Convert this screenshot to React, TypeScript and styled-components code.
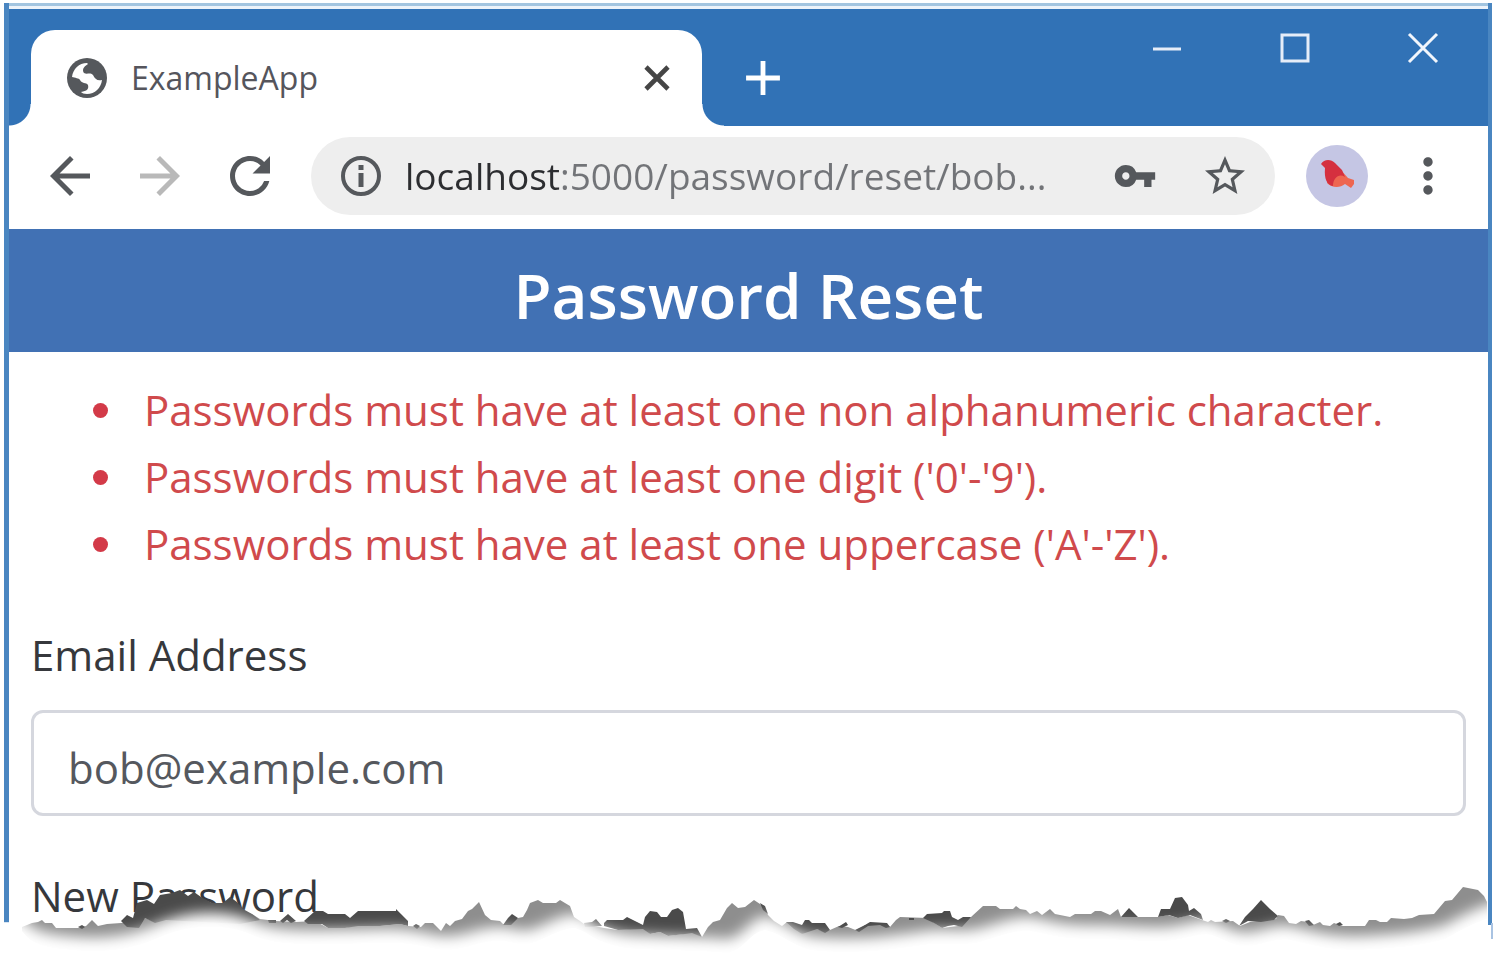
import React from "react";
import styled, { createGlobalStyle } from "styled-components";
import {
  MdAdd,
  MdArrowBack,
  MdArrowForward,
  MdMoreVert,
  MdRefresh,
  MdStarBorder,
  MdVpnKey,
} from "react-icons/md";

const FRAME = "#3172b6";
const INK = "#55585c";

const GlobalStyle = createGlobalStyle`
  *, *::before, *::after { box-sizing: border-box; }
  body {
    margin: 0;
    background: #fff;
    font-family: "Open Sans", "Noto Sans", sans-serif;
    color: #36383c;
  }
  button { border: 0; padding: 0; background: none; font: inherit; color: inherit; }
`;

const Shell = styled.div`
  position: relative;
  padding: 3px 7px 53px 4px;
`;

const BrowserWindow = styled.div`
  height: 920px;
  overflow: hidden;
  border: solid #4a86c1;
  border-width: 0 4px 0 5px;
`;

const TopEdge = styled.div`
  height: 6px;
  border-top: 3px solid #a3c5e0;
  background: #edf3fa;
`;

const TabStrip = styled.div`
  display: flex;
  align-items: flex-end;
  height: 117px;
  padding-left: 22px;
  background: ${FRAME};
`;

const Tab = styled.div`
  position: relative;
  flex: 0 1 671px;
  display: flex;
  align-items: center;
  height: 96px;
  padding: 0 32px 0 36px;
  border-radius: 24px 24px 0 0;
  background: #fff;

  &::before,
  &::after {
    content: "";
    position: absolute;
    bottom: 0;
    width: 22px;
    height: 22px;
  }
  &::before {
    right: 100%;
    background: radial-gradient(circle at 0 0, ${FRAME} 21px, #fff 22px);
  }
  &::after {
    left: 100%;
    background: radial-gradient(circle at 100% 0, ${FRAME} 21px, #fff 22px);
  }
`;

const TabTitle = styled.span`
  flex: 1;
  padding-left: 24px;
  font-size: 32px;
  line-height: 44px;
  color: #55555c;
`;

const IconButton = styled.button<{ $size: number; $color?: string }>`
  flex: none;
  display: grid;
  place-items: center;
  width: ${(p) => p.$size}px;
  height: ${(p) => p.$size}px;
  color: ${(p) => p.$color ?? INK};

  svg { display: block; }
`;

const NewTab = styled.div`
  flex: 1;
  padding: 0 0 18px 31px;
`;

const WindowControls = styled.div`
  align-self: flex-start;
  display: flex;
  gap: 84px;
  padding: 17px 43px 0 0;
`;

const Toolbar = styled.div`
  display: flex;
  align-items: center;
  height: 103px;
  padding: 0 30px 4px 31px;
`;

const NavButtons = styled.div`
  display: flex;
  gap: 30px;
  padding-right: 31px;
`;

const AddressBar = styled.div`
  flex: 1;
  display: flex;
  align-items: center;
  height: 78px;
  padding: 0 26px;
  border-radius: 39px;
  background: #eee;
`;

const Address = styled.input`
  flex: 1;
  min-width: 0;
  margin: 0 20px;
  padding: 0;
  border: 0;
  outline: 0;
  font: 37px/52px "Open Sans", "Noto Sans", sans-serif;
  color: transparent;
  background: linear-gradient(90deg, #2c2d30 155px, #727478 155px);
  -webkit-background-clip: text;
  background-clip: text;
`;

const AddressActions = styled.div`
  display: flex;
  gap: 42px;
`;

const Avatar = styled(IconButton)`
  margin: 0 30px 0 31px;
  border-radius: 50%;
  background: #c5c6e4;
`;

const Banner = styled.h1`
  margin: 0;
  height: 123px;
  padding-top: 24px;
  background: #4171b4;
  color: #fff;
  text-align: center;
  font-size: 62px;
  line-height: 84px;
  font-weight: 600;
`;

const Page = styled.main`
  padding: 24px 22px 0;
`;

const Errors = styled.ul`
  margin: 0 0 44px;
  padding-left: 99px;
  color: #d04a4c;
  font-size: 42px;
  line-height: 67px;

  li { padding-left: 14px; }
  li::marker { color: #d33a48; }
`;

const Field = styled.div`
  margin-bottom: 46px;
`;

const Label = styled.label`
  display: block;
  margin-bottom: 22px;
  font-size: 42px;
  line-height: 67px;
`;

const TextBox = styled.input`
  display: block;
  width: 100%;
  height: 106px;
  padding: 8px 34px 0;
  border: 3px solid #d5d7de;
  border-radius: 12px;
  background: #fff;
  color: #55585e;
  font: 42px/67px "Open Sans", "Noto Sans", sans-serif;
`;

const Tear = styled.svg`
  position: absolute;
  left: 0;
  top: 880px;
  width: 100%;
  height: 96px;
  pointer-events: none;
`;

const Globe = () => (
  <svg width="40" height="40" viewBox="0 0 40 40" aria-hidden="true">
    <circle cx="20" cy="20" r="20" fill={INK} />
    <path
      fill="#fff"
      d="M5 19C6 11 12 5 20 5L21 6C16 9 15 12 17 15C20 17 23 14 26 17C28 21 30 23 35 22C34 30 28 36 20 36C17 36 15 35 14 34C20 33 22 31 21 27C19 24 15 26 13 22C12 20 8 20 5 19Z"
    />
  </svg>
);

const InfoIcon = () => (
  <svg width="40" height="40" viewBox="0 0 40 40" aria-hidden="true">
    <circle cx="20" cy="20" r="18" fill="none" stroke={INK} strokeWidth="4" />
    <path d="M20 9V14M20 17V31" stroke={INK} strokeWidth="5" />
  </svg>
);

const Bird = () => (
  <svg width="62" height="62" viewBox="0 0 62 62" aria-hidden="true">
    <path
      fill="#ee6650"
      d="M24 20L34 24L42 33L48 35L48 39L45 43L39 39C34 43 26 43 21 38Z"
    />
    <path
      fill="#d5303f"
      d="M15 19C18 14 25 14 29 18L36 25L39 32C33 28 27 33 27 41C21 40 18 34 19 23Z"
    />
  </svg>
);

const GREY_EDGE =
  "M22 927L32 923L38 922L42 920L45 923L52 923L56 928L78 928L86 926L92 920L98 926L107 924L121 923L137 922L145 918L155 922L166 917L180 910L200 908L225 910L243 912L252 914L260 919L276 921L296 922L315 921L328 928L345 928L358 924L380 926L400 924L408 926L421 927L425 923L433 923L441 931L446 923L450 926L455 921L462 919L468 911L472 909L479 902L485 915L491 920L500 921L504 925L518 918L523 917L527 910L530 903L538 900L543 903L556 903L560 900L565 903L570 906L574 917L580 921L584 924L604 928L618 930L643 928L650 934L660 932L668 936L683 934L692 931L702 937L708 927L713 922L720 920L727 908L732 903L738 908L745 907L754 900L760 904L765 908L768 915L774 921L782 926L787 922L793 923L802 934L812 927L825 932L830 930L839 926L848 927L858 931L865 925L887 924L890 927L896 920L900 917L927 918L942 928L958 926L971 917L983 906L996 906L1000 909L1013 909L1016 906L1020 909L1026 910L1030 914L1037 911L1042 915L1050 909L1055 914L1070 917L1075 914L1091 914L1095 911L1101 911L1110 915L1118 909L1121 917L1158 917L1168 915L1178 918L1188 915L1202 920L1208 922L1211 920L1215 922L1233 921L1240 926L1250 922L1276 919L1278 915L1284 916L1289 923L1296 924L1301 921L1308 922L1313 925L1320 922L1323 925L1330 926L1334 923L1342 926L1365 926L1369 920L1376 920L1380 922L1387 922L1391 918L1404 919L1412 918L1419 915L1434 914L1445 901L1452 900L1463 887L1468 888L1478 890L1484 896L1487 902L1487 976L22 976Z";

const DARK_PATCHES =
  "M121 921L127 915L133 918L137 903L147 900L154 904L160 895L172 893L180 890L188 896L194 892L201 897L212 903L223 903L230 897L237 902L243 909L252 914L260 920L240 924L166 920L155 923L145 918L139 928L127 927Z" +
  "M78 927l4 -2l3 2l-3 2Z M268 920h8v3h-7Z M280 921L288 914L296 921L291 923L287 920L283 923Z" +
  "M304 921L315 911L323 911L328 914L345 914L350 918L358 911L396 911L396 909L408 921L408 926L400 924L380 926L358 926L345 928L328 928L322 924L308 924Z" +
  "M413 926l3 -2l4 2l-3 3Z M503 925L508 918L512 914L518 918L511 925Z M584 923L592 922L596 919L602 926L585 927Z" +
  "M604 923L607 920L623 920L627 917L637 922L643 925L645 917L650 911L657 912L661 917L667 917L672 910L678 908L683 912L686 929L697 928L702 937L692 933L685 934L668 936L660 932L650 934L643 929L618 930L604 926Z" +
  "M760 903L765 906L768 914L763 910Z M786 922L793 922L802 925L805 920L809 920L812 923L825 923L830 930L825 933L817 929L802 934L794 929Z" +
  "M838 927L846 922L848 925L842 928Z M855 930L865 925L870 922L887 923L890 927L886 928L880 925L868 926L859 932Z M909 918h5v2h-5Z" +
  "M923 918L927 914L942 913L944 911L950 911L952 917L958 920L963 917L971 917L962 927L954 925L948 926L942 928L934 923Z" +
  "M1121 917L1129 908L1138 917Z M1158 917L1161 909L1170 909L1175 898L1182 897L1188 905L1189 911L1194 908L1201 914L1203 920L1190 915L1178 918L1169 915Z" +
  "M1222 921l4 -2l4 2l-4 2Z M1239 926L1245 917L1253 909L1261 900L1270 909L1278 916L1274 920L1261 922L1248 921Z M1305 921L1309 920L1314 925L1309 926Z M1336 924l4 -2l3 3l-4 1Z";

const SHADOW_END =
  "M-30 927L22 927C32 940 40 944 85 947C115 948 135 944 160 933C190 920 225 920 250 930C275 942 300 941 380 939C410 937 430 945 445 946C465 946 480 937 495 937C510 936 515 941 528 940C540 938 560 924 575 924C590 928 600 944 640 945C680 947 710 947 728 949C745 945 750 928 765 926C785 930 795 946 820 947C860 950 890 946 930 940C950 939 965 942 980 938C1000 932 1015 926 1030 927C1050 930 1060 936 1100 935C1120 935 1140 938 1165 937C1185 936 1200 928 1212 931C1230 938 1235 943 1250 942C1265 940 1275 934 1290 936C1310 940 1330 947 1360 946C1400 944 1425 941 1445 935C1465 924 1480 914 1530 902L1530 1010L-30 1010Z";

const TornEdge = () => (
  <Tear viewBox="0 880 1499 96" preserveAspectRatio="none" aria-hidden="true">
    <defs>
      <filter id="fade" x="-5%" y="-50%" width="110%" height="200%">
        <feGaussianBlur stdDeviation="7" />
      </filter>
    </defs>
    <path d={GREY_EDGE} fill="#8e8e8e" />
    <path d={DARK_PATCHES} fill="#4a4a4a" />
    <path d={SHADOW_END} fill="#fff" transform="translate(0 -10)" filter="url(#fade)" />
    <path d={SHADOW_END} fill="#fff" transform="translate(0 4)" />
    <path d="M4 880h5v42h-5zM1488 880h4v45h-4z" fill="#4a86c1" />
    <path d="M1491 923h2v16h-2z" fill="#a9c3e2" />
  </Tear>
);

const ERRORS = [
  "Passwords must have at least one non alphanumeric character.",
  "Passwords must have at least one digit ('0'-'9').",
  "Passwords must have at least one uppercase ('A'-'Z').",
];

export default function App() {
  return (
    <Shell>
      <GlobalStyle />
      <BrowserWindow>
        <TopEdge />
        <TabStrip>
          <Tab>
            <Globe />
            <TabTitle>ExampleApp</TabTitle>
            <IconButton $size={26} $color="#454545" aria-label="Close tab">
              <svg width="26" height="26" viewBox="0 0 26 26" stroke="currentColor" strokeWidth="4.6">
                <path d="M2 2L24 24M24 2L2 24" />
              </svg>
            </IconButton>
          </Tab>
          <NewTab>
            <IconButton $size={60} $color="#fff" aria-label="New tab">
              <MdAdd size={58} />
            </IconButton>
          </NewTab>
          <WindowControls>
            <IconButton $size={44} $color="#fff" aria-label="Minimize">
              <svg width="44" height="44" viewBox="0 0 44 44" stroke="#e6edf8" strokeWidth="3">
                <path d="M8 23H36" />
              </svg>
            </IconButton>
            <IconButton $size={44} $color="#fff" aria-label="Maximize">
              <svg width="44" height="44" viewBox="0 0 44 44" stroke="#e6edf8" strokeWidth="3" fill="none">
                <path d="M9 9H35V35H9Z" />
              </svg>
            </IconButton>
            <IconButton $size={44} $color="#fff" aria-label="Close window">
              <svg width="44" height="44" viewBox="0 0 44 44" stroke="#f2f6fc" strokeWidth="3">
                <path d="M8 8L36 36M36 8L8 36" />
              </svg>
            </IconButton>
          </WindowControls>
        </TabStrip>
        <Toolbar>
          <NavButtons>
            <IconButton $size={60} aria-label="Back">
              <MdArrowBack size={60} />
            </IconButton>
            <IconButton $size={60} $color="#b9b9b9" aria-label="Forward">
              <MdArrowForward size={60} />
            </IconButton>
            <IconButton $size={60} aria-label="Reload">
              <MdRefresh size={60} />
            </IconButton>
          </NavButtons>
          <AddressBar>
            <IconButton $size={48} aria-label="Site information">
              <InfoIcon />
            </IconButton>
            <Address aria-label="Address" defaultValue="localhost:5000/password/reset/bob..." />
            <AddressActions>
              <IconButton $size={48} aria-label="Saved passwords">
                <MdVpnKey size={44} />
              </IconButton>
              <IconButton $size={48} aria-label="Bookmark this page">
                <MdStarBorder size={48} />
              </IconButton>
            </AddressActions>
          </AddressBar>
          <Avatar $size={62} aria-label="Profile">
            <Bird />
          </Avatar>
          <IconButton $size={60} aria-label="Menu">
            <MdMoreVert size={56} />
          </IconButton>
        </Toolbar>
        <Banner>Password Reset</Banner>
        <Page>
          <Errors>
            {ERRORS.map((text) => (
              <li key={text}>{text}</li>
            ))}
          </Errors>
          <Field>
            <Label htmlFor="email">Email Address</Label>
            <TextBox id="email" type="email" defaultValue="bob@example.com" />
          </Field>
          <Field>
            <Label htmlFor="password">New Password</Label>
            <TextBox id="password" type="password" />
          </Field>
        </Page>
      </BrowserWindow>
      <TornEdge />
    </Shell>
  );
}
